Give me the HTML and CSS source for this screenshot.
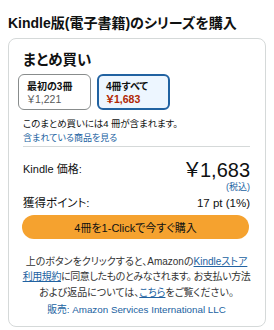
FILE: index.html
```html
<!DOCTYPE html>
<html lang="ja">
<head>
<meta charset="utf-8">
<link rel="stylesheet" href="styles.css">
</head>
<body>
<h1 class="title">Kindle版(電子書籍)のシリーズを購入</h1>
<div class="card">
  <h2 class="heading">まとめ買い</h2>
  <div class="options">
    <div class="option">
      <div class="opt-name">最初の3冊</div>
      <div class="opt-price">￥1,221</div>
    </div>
    <div class="option selected">
      <div class="opt-name">4冊すべて</div>
      <div class="opt-price">￥1,683</div>
    </div>
  </div>
  <p class="includes">このまとめ買いには4 冊が含まれます。</p>
  <a class="link see" href="#">含まれている商品を見る</a>
  <div class="divider"></div>
  <div class="row price-row">
    <span class="label">Kindle 価格:</span>
    <span class="big-price">￥1,683</span>
  </div>
  <div class="tax"><a class="link" href="#">(税込)</a></div>
  <div class="row points">
    <span class="label">獲得ポイント:</span>
    <span>17 pt (1%)</span>
  </div>
  <button class="buy">4冊を1-Clickで今すぐ購入</button>
  <p class="fine"><span class="line">上のボタンをクリックすると、Amazonの<a class="ul" href="#">Kindleストア</a></span><br><span class="line tight"><a class="ul" href="#">利用規約</a>に同意したものとみなされます。 お支払い方法</span><br><span class="line">および返品については、<a class="ul" href="#">こちら</a>をご覧ください。</span></p>
  <p class="seller">販売: Amazon Services International LLC</p>
</div>
</body>
</html>
```
FILE: styles.css
```css
* { box-sizing: border-box; }
body {
  margin: 8px;
  font-family: "Liberation Sans", "Noto Sans CJK JP", sans-serif;
  font-feature-settings: "palt";
  color: #0f1111;
  background: #fff;
}
.title {
  font-size: 14px;
  font-weight: bold;
  margin: 3px 0 7px;
  padding-top: 2px;
  line-height: 20px;
  height: 20px;
  white-space: nowrap;
}
.card {
  border: 1px solid #d5d9d9;
  border-radius: 8px;
  padding: 10px 15px 6px 14px;
  height: 289px;
}
.heading {
  font-size: 14.5px;
  font-weight: bold;
  margin: 0;
  line-height: 22px;
}
.options {
  display: flex;
  gap: 6px;
  margin: 3px 0 0 -5px;
}
.option {
  width: 73px;
  height: 36px;
  border: 1px solid #888c8c;
  border-radius: 6px;
  padding: 5px 0 0 8px;
  font-size: 10px;
  line-height: 13px;
}
.option.selected {
  border: 2px solid #2162a1;
  background: #edf6ff;
  padding: 4px 0 0 7px;
}
.opt-name { font-weight: bold; }
.opt-price { color: #565959; font-size: 10.5px; }
.selected .opt-price { color: #b12704; font-weight: bold; }
.includes {
  font-size: 9.5px;
  letter-spacing: -0.1px;
  margin: 7px 0 0;
  line-height: 14px;
}
.link { color: #2162a1; text-decoration: none; }
.see {
  display: block;
  font-size: 9px;
  line-height: 14px;
}
.divider {
  border-top: 1px solid #d5d9d9;
  margin: 1px 0 0;
}
.row {
  display: flex;
  justify-content: space-between;
  align-items: center;
}
.price-row {
  margin-top: 7px;
  font-size: 11px;
  height: 28px;
}
.big-price {
  font-size: 20px;
}
.tax {
  text-align: right;
  font-size: 9px;
  line-height: 12px;
  margin-top: -1px;
}
.points {
  font-size: 11.5px;
  margin-top: 1px;
  line-height: 18px;
}
.buy {
  display: block;
  width: 100%;
  height: 24px;
  margin: 3px 0 0 -1px;
  border: none;
  border-radius: 12px;
  background: #f5a22f;
  color: #0f1111;
  font-family: inherit;
  font-feature-settings: "palt";
  font-size: 11px;
}
.fine {
  text-align: center;
  font-size: 10px;
  line-height: 15.5px;
  color: #333;
  margin: 14.5px -5px 0;
}
.line { white-space: nowrap; }
.tight { letter-spacing: -0.4px; }
.ul { color: #2162a1; text-decoration: underline; }
.seller {
  text-align: center;
  font-size: 9.8px;
  color: #2162a1;
  margin: 2.5px 0 0;
  line-height: 14px;
}
```
